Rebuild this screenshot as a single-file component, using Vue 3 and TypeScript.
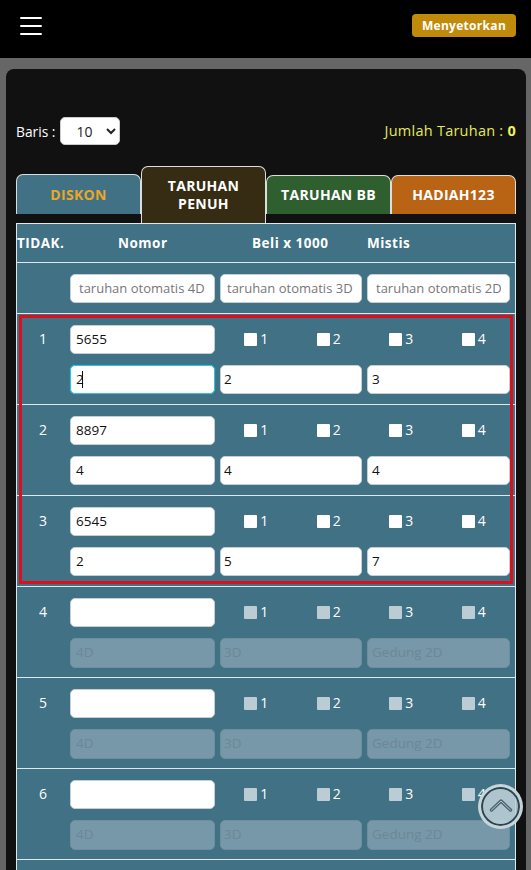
<script setup lang="ts">
interface Row { no: number; num: string; d4: string; d3: string; d2: string }
const filled: Row[] = [
  { no: 1, num: '5655', d4: '2', d3: '2', d2: '3' },
  { no: 2, num: '8897', d4: '4', d3: '4', d2: '4' },
  { no: 3, num: '6545', d4: '2', d3: '5', d2: '7' },
]
const empty = [4, 5, 6]
const checks = [1, 2, 3, 4]
</script>

<template>
  <div class="page">
    <header class="topbar">
      <button class="burger" aria-label="menu"><span></span><span></span><span></span></button>
      <button class="deposit">Menyetorkan</button>
    </header>

    <main class="card">
      <div class="tools">
        <label class="rows-label">Baris :
          <select class="rows-select"><option>10</option><option>20</option></select>
        </label>
        <div class="total">Jumlah Taruhan : <b>0</b></div>
      </div>

      <nav class="tabs">
        <div class="tab tab-disc">DISKON</div>
        <div class="tab tab-full">TARUHAN<br />PENUH</div>
        <div class="tab tab-bb">TARUHAN BB</div>
        <div class="tab tab-prize">HADIAH123</div>
      </nav>

      <section class="table">
        <div class="head">
          <div class="h-no">TIDAK.</div>
          <div class="h-num">Nomor</div>
          <div class="h-buy">Beli x 1000</div>
          <div class="h-mis">Mistis</div>
        </div>
        <div class="auto">
          <div></div>
          <input class="field ph" placeholder="taruhan otomatis 4D" />
          <input class="field ph p2" placeholder="taruhan otomatis 3D" />
          <input class="field ph" placeholder="taruhan otomatis 2D" />
        </div>

        <div class="group">
          <div v-for="r in filled" :key="r.no" class="row">
            <div class="no">{{ r.no }}</div>
            <input class="field c1" :value="r.num" />
            <div class="checks">
              <label v-for="c in checks" :key="c" class="chk"><i class="box"></i>{{ c }}</label>
            </div>
            <div></div>
            <div class="focus-wrap" :class="{ focused: r.no === 1 }">
              <input class="field c1" :value="r.d4" />
              <i v-if="r.no === 1" class="caret"></i>
            </div>
            <input class="field c2" :value="r.d3" />
            <input class="field c3" :value="r.d2" />
          </div>
          <div class="red"></div>
        </div>

        <div v-for="n in empty" :key="n" class="row">
          <div class="no">{{ n }}</div>
          <input class="field c1" />
          <div class="checks">
            <label v-for="c in checks" :key="c" class="chk"><i class="box off"></i>{{ c }}</label>
          </div>
          <div></div>
          <input class="field off c1" placeholder="4D" disabled />
          <input class="field off c2" placeholder="3D" disabled />
          <input class="field off c3" placeholder="Gedung 2D" disabled />
        </div>
      </section>
    </main>

    <button class="up" aria-label="up">
      <svg viewBox="0 0 24 14" width="24" height="14">
        <path d="M2.5 12 12 3l9.5 9" fill="none" stroke="#4a6572" stroke-width="3.4" stroke-linecap="round" stroke-linejoin="round" />
        <path d="M2.5 12 12 3l9.5 9" fill="none" stroke="#b5c9d1" stroke-width="1" stroke-linecap="round" stroke-linejoin="round" />
      </svg>
    </button>
  </div>
</template>

<style>
html, body { margin: 0; height: 100%; overflow: hidden; background: #666; }
</style>

<style scoped>
* { box-sizing: border-box; }
.page {
  position: relative;
  width: 531px;
  height: 870px;
  overflow: hidden;
  background: #666;
  font-family: "Open Sans", "Noto Sans", sans-serif;
  color: #fff;
}
.topbar {
  height: 58px;
  background: #000;
  display: flex;
  justify-content: space-between;
  align-items: flex-start;
  padding: 14px 15px 0 20px;
}
.burger {
  width: 22px;
  height: 18px;
  margin-top: 3px;
  padding: 0;
  background: none;
  border: 0;
  display: flex;
  flex-direction: column;
  justify-content: space-between;
}
.burger span { display: block; height: 2.2px; background: #fff; border-radius: 1px; }
.deposit {
  width: 104px;
  height: 23px;
  padding: 0;
  background: #c08a0a;
  border: 0;
  border-radius: 4px;
  color: #fff;
  font: 700 12px/23px "Open Sans", sans-serif;
  letter-spacing: 0.3px;
}
.card {
  margin: 11px 5px 0 6px;
  height: 810px;
  padding: 48px 10px 0;
  background: #111;
  border-radius: 8px 8px 0 0;
}
.tools {
  height: 28px;
  display: flex;
  justify-content: space-between;
  align-items: center;
}
.rows-label { font-size: 13.8px; display: flex; align-items: center; gap: 5px; }
.rows-select {
  width: 60px;
  height: 28px;
  background: #fff;
  border: 1px solid #ccc;
  border-radius: 5px;
  color: #222;
  font: 14px "Open Sans", sans-serif;
  padding-left: 11px;
}
.total { font-size: 14.5px; line-height: 18px; margin-top: -1px; color: #e4e95f; letter-spacing: 0.25px; }
.total b { font-weight: 700; color: #eef05a; }
.tabs {
  display: grid;
  grid-template-columns: repeat(4, 125px);
  height: 57px;
  margin-top: 21px;
  align-items: start;
  position: relative;
  z-index: 1;
}
.tab {
  display: flex;
  align-items: center;
  justify-content: center;
  text-align: center;
  font-weight: 700;
  font-size: 14px;
  line-height: 18px;
  letter-spacing: 0.3px;
  border: 1px solid #ddd;
  border-bottom: 0;
  border-radius: 7px 7px 0 0;
}
.tab-disc { height: 40px; margin-top: 8px; background: #407185; color: #eba726; }
.tab-full { height: 57px; background: #362c13; }
.tab-bb { height: 39px; margin-top: 9px; background: #2f5f2f; }
.tab-prize { height: 39px; margin-top: 9px; background: #b96415; }
.table {
  width: 500px;
  height: 647px;
  background: #407185;
  border: 1px solid #dfe8ec;
  border-bottom: 0;
}
.head {
  display: grid;
  grid-template-columns: 53px 145px 149px 148px;
  height: 39px;
  border-bottom: 1px solid #dfe8ec;
  align-items: center;
  font-size: 13.5px;
  font-weight: 700;
  letter-spacing: 0.5px;
}
.h-num { padding-left: 48px; }
.h-buy { padding-left: 37px; white-space: nowrap; }
.h-mis { padding-left: 3px; }
.auto {
  display: grid;
  grid-template-columns: 48px 145px 142px 143px;
  column-gap: 5px;
  height: 51px;
  padding-top: 11px;
  border-bottom: 1px solid #dfe8ec;
}
.group { position: relative; }
.red {
  position: absolute;
  left: 2px;
  right: 2px;
  top: 1px;
  bottom: 3px;
  border: 3px solid #dc0f1c;
  pointer-events: none;
}
.row {
  display: grid;
  grid-template-columns: 48px 145px 142px 143px;
  grid-template-rows: 29px 29px;
  column-gap: 5px;
  row-gap: 11px;
  height: 91px;
  padding-top: 11px;
  border-bottom: 1px solid #dfe8ec;
  align-items: start;
}
.no { font-size: 14px; text-align: center; line-height: 27px; padding-left: 4px; }
.field {
  display: block;
  width: 100%;
  height: 29px;
  min-width: 0;
  padding: 0 8px 2px;
  background: #fff;
  border: 1px solid #c4ced3;
  border-radius: 5px;
  outline: 0;
  color: #111;
  font: 13.5px "Open Sans", sans-serif;
}
.field.ph { font-size: 13px; }
.field.p2 { padding-left: 6px; }
.field::placeholder { color: #777; opacity: 1; }
.field.c1 { padding-left: 5px; }
.field.c2 { padding-left: 3px; }
.field.c3 { padding-left: 4px; }
.field.off {
  height: 30px;
  padding-bottom: 3px;
  background: #7698a8;
  border-color: #6f8e9d;
}
.field.off::placeholder { color: #6e8795; }
.checks {
  grid-column: 3 / 5;
  width: 290px;
  display: grid;
  grid-template-columns: repeat(4, 1fr);
}
.chk {
  display: flex;
  align-items: center;
  justify-content: center;
  gap: 3px;
  height: 27px;
  font-size: 14px;
}
.box {
  display: block;
  width: 13px;
  height: 13px;
  margin-top: 1px;
  background: #fff;
  border-radius: 1px;
}
.box.off { background: #bcccd4; }
.focus-wrap { position: relative; }
.focused .field { border-color: #28c3e6; box-shadow: 0 0 1px #28c3e6; }
.caret {
  position: absolute;
  left: 12px;
  top: 6px;
  width: 1px;
  height: 17px;
  background: #111;
}
.up {
  position: absolute;
  left: 478px;
  top: 784px;
  width: 45px;
  height: 45px;
  padding: 0;
  border-radius: 50%;
  border: 3px solid rgba(205, 215, 219, 0.85);
  background: rgba(190, 208, 216, 0.88);
  box-shadow: inset 0 0 0 2px #2b4753;
  display: flex;
  align-items: center;
  justify-content: center;
}
.up svg { margin-top: -4px; }
</style>
